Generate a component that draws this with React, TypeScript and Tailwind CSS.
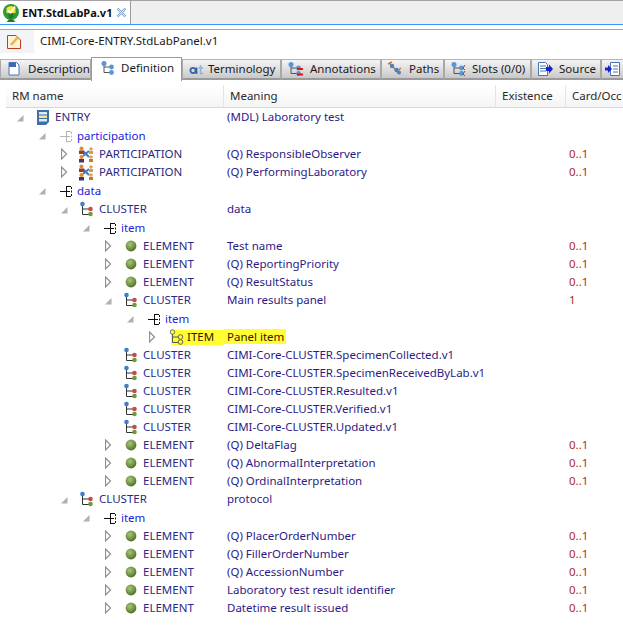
import type { ReactNode } from "react";

type Kind = "entry" | "attr" | "attrOff" | "part" | "cluster" | "element" | "item";

interface Row {
  depth: number;
  arrow: "open" | "closed" | "none";
  kind: Kind;
  name: string;
  meaning?: string;
  card?: string;
  highlight?: boolean;
}

const rows: Row[] = [
  { depth: 0, arrow: "open", kind: "entry", name: "ENTRY", meaning: "(MDL) Laboratory test" },
  { depth: 1, arrow: "open", kind: "attrOff", name: "participation" },
  { depth: 2, arrow: "closed", kind: "part", name: "PARTICIPATION", meaning: "(Q) ResponsibleObserver", card: "0..1" },
  { depth: 2, arrow: "closed", kind: "part", name: "PARTICIPATION", meaning: "(Q) PerformingLaboratory", card: "0..1" },
  { depth: 1, arrow: "open", kind: "attr", name: "data" },
  { depth: 2, arrow: "open", kind: "cluster", name: "CLUSTER", meaning: "data" },
  { depth: 3, arrow: "open", kind: "attr", name: "item" },
  { depth: 4, arrow: "closed", kind: "element", name: "ELEMENT", meaning: "Test name", card: "0..1" },
  { depth: 4, arrow: "closed", kind: "element", name: "ELEMENT", meaning: "(Q) ReportingPriority", card: "0..1" },
  { depth: 4, arrow: "closed", kind: "element", name: "ELEMENT", meaning: "(Q) ResultStatus", card: "0..1" },
  { depth: 4, arrow: "open", kind: "cluster", name: "CLUSTER", meaning: "Main results panel", card: "1" },
  { depth: 5, arrow: "open", kind: "attr", name: "item" },
  { depth: 6, arrow: "closed", kind: "item", name: "ITEM", meaning: "Panel item", highlight: true },
  { depth: 4, arrow: "none", kind: "cluster", name: "CLUSTER", meaning: "CIMI-Core-CLUSTER.SpecimenCollected.v1" },
  { depth: 4, arrow: "none", kind: "cluster", name: "CLUSTER", meaning: "CIMI-Core-CLUSTER.SpecimenReceivedByLab.v1" },
  { depth: 4, arrow: "none", kind: "cluster", name: "CLUSTER", meaning: "CIMI-Core-CLUSTER.Resulted.v1" },
  { depth: 4, arrow: "none", kind: "cluster", name: "CLUSTER", meaning: "CIMI-Core-CLUSTER.Verified.v1" },
  { depth: 4, arrow: "none", kind: "cluster", name: "CLUSTER", meaning: "CIMI-Core-CLUSTER.Updated.v1" },
  { depth: 4, arrow: "closed", kind: "element", name: "ELEMENT", meaning: "(Q) DeltaFlag", card: "0..1" },
  { depth: 4, arrow: "closed", kind: "element", name: "ELEMENT", meaning: "(Q) AbnormalInterpretation", card: "0..1" },
  { depth: 4, arrow: "closed", kind: "element", name: "ELEMENT", meaning: "(Q) OrdinalInterpretation", card: "0..1" },
  { depth: 2, arrow: "open", kind: "cluster", name: "CLUSTER", meaning: "protocol" },
  { depth: 3, arrow: "open", kind: "attr", name: "item" },
  { depth: 4, arrow: "closed", kind: "element", name: "ELEMENT", meaning: "(Q) PlacerOrderNumber", card: "0..1" },
  { depth: 4, arrow: "closed", kind: "element", name: "ELEMENT", meaning: "(Q) FillerOrderNumber", card: "0..1" },
  { depth: 4, arrow: "closed", kind: "element", name: "ELEMENT", meaning: "(Q) AccessionNumber", card: "0..1" },
  { depth: 4, arrow: "closed", kind: "element", name: "ELEMENT", meaning: "Laboratory test result identifier", card: "0..1" },
  { depth: 4, arrow: "closed", kind: "element", name: "ELEMENT", meaning: "Datetime result issued", card: "0..1" },
];

function Arrow({ type }: { type: Row["arrow"] }) {
  if (type === "none") return <span className="w-[9px] h-[11px] shrink-0" />;
  if (type === "open") {
    return (
      <svg width="9" height="11" viewBox="0 0 9 11" className="shrink-0">
        <path d="M0 9.5 H6.5 V3 Z" fill="#b0b0b0" />
      </svg>
    );
  }
  return (
    <svg width="9" height="12" viewBox="0 0 9 12" className="shrink-0">
      <path d="M0.5 1 L5.5 6 L0.5 11 Z" fill="#fff" stroke="#8f8f8f" strokeWidth="1.2" />
    </svg>
  );
}

function KindIcon({ kind }: { kind: Kind }) {
  switch (kind) {
    case "entry":
      return (
        <svg width="14" height="17" viewBox="0 0 14 17">
          <path d="M1 1 H13 V13 L10 16 H1 Z" fill="#3d6fa8" />
          <rect x="3" y="3" width="8" height="2.5" fill="#dfe9f5" />
          <rect x="3" y="6.5" width="8" height="2.5" fill="#f3e79a" />
          <rect x="3" y="10" width="8" height="2.5" fill="#dfe9f5" />
        </svg>
      );
    case "attr":
    case "attrOff": {
      const col = kind === "attr" ? "#111" : "#b5b5b5";
      return (
        <svg width="14" height="14" viewBox="0 0 14 14">
          <path d="M0 7.5 H10 M6.5 2 V13 M6.5 2.5 H11 M6.5 12.5 H11 M11.5 3 V5 M11.5 6.5 V8.5 M11.5 10 V12" fill="none" stroke={col} strokeWidth="1" />
        </svg>
      );
    }
    case "part":
      return (
        <svg width="16" height="17" viewBox="0 0 16 17">
          <path d="M5 10 L11 5 M5 5 L11 11" stroke="#4b78b8" strokeWidth="2" />
          <circle cx="3.5" cy="2.5" r="2" fill="#e08a2c" />
          <path d="M1 8 V4.5 H6 V8 Z" fill="#a33a1e" />
          <circle cx="3.5" cy="11" r="2" fill="#e08a2c" />
          <path d="M1 16.5 V13 H6 V16.5 Z" fill="#3a3a70" />
          <circle cx="13" cy="3" r="1.8" fill="#e8a050" />
          <path d="M11 8 V5 H15 V8 Z" fill="#c9a24a" />
          <circle cx="13" cy="11" r="1.8" fill="#e8a050" />
          <path d="M11 16 V13 H15 V16 Z" fill="#c9772a" />
        </svg>
      );
    case "cluster":
      return (
        <svg width="16" height="16" viewBox="0 0 16 16">
          <path d="M3.5 4 V13.5 H10 M3.5 8 H10" fill="none" stroke="#333" strokeWidth="1" />
          <circle cx="3.5" cy="3" r="2.3" fill="#3f7fc8" />
          <circle cx="11.5" cy="8" r="2.3" fill="#c84a4a" />
          <circle cx="11.5" cy="13" r="2.3" fill="#6e9a3a" />
        </svg>
      );
    case "item":
      return (
        <svg width="16" height="16" viewBox="0 0 16 16">
          <path d="M3.5 4 V13.5 H9 M3.5 8 H9" fill="none" stroke="#555" strokeWidth="1" />
          <circle cx="3.5" cy="3" r="2.3" fill="#ffff33" stroke="#666" strokeWidth="0.9" />
          <circle cx="11.5" cy="8" r="2.3" fill="#ffff33" stroke="#555" strokeWidth="0.9" />
          <circle cx="11.5" cy="13" r="2.3" fill="#ffff33" stroke="#555" strokeWidth="0.9" />
        </svg>
      );
    case "element":
      return (
        <svg width="16" height="16" viewBox="0 0 16 16">
          <defs>
            <radialGradient id="elementBall" cx="40%" cy="35%" r="70%">
              <stop offset="0%" stopColor="#a8c47c" />
              <stop offset="60%" stopColor="#6f9443" />
              <stop offset="100%" stopColor="#47642a" />
            </radialGradient>
          </defs>
          <circle cx="8" cy="8" r="5.4" fill="url(#elementBall)" />
        </svg>
      );
  }
}

function TabIcon({ children }: { children: ReactNode }) {
  return (
    <svg width="16" height="16" viewBox="0 0 16 16" className="shrink-0">
      {children}
    </svg>
  );
}

const nodes = (
  <>
    <path d="M4 5 V12.5 H10 M4 7 H10" fill="none" stroke="#555" />
    <circle cx="4" cy="3.5" r="2.5" fill="#5a94d8" />
    <circle cx="11.5" cy="7" r="2.4" fill="#5a94d8" />
    <circle cx="11.5" cy="12.5" r="2.4" fill="#5a94d8" />
  </>
);

const tabs: { label: string; icon: ReactNode; w: string; gap: string; active?: boolean }[] = [
  {
    label: "Description",
    w: "w-[91px]",
    gap: "gap-[6px]",
    icon: (
      <TabIcon>
        <path d="M3 1.5 H10.5 L13 4 V14 H3 Z" fill="#fff" stroke="#4a76b0" />
        <path d="M3 2 H10 V6 H3 Z" fill="#3e6cae" />
      </TabIcon>
    ),
  },
  { label: "Definition", w: "w-[91px]", gap: "gap-[5px]", active: true, icon: <TabIcon>{nodes}</TabIcon> },
  {
    label: "Terminology",
    w: "w-[99px]",
    gap: "gap-[4px]",
    icon: (
      <TabIcon>
        <circle cx="5" cy="9.5" r="2.6" fill="none" stroke="#3565a8" strokeWidth="1.8" />
        <path d="M8.5 6.5 V13" stroke="#3565a8" strokeWidth="1.8" />
        <path d="M12.5 4 V12.5 H15 M10.5 7 H15" fill="none" stroke="#8fb0d8" strokeWidth="1.5" />
      </TabIcon>
    ),
  },
  {
    label: "Annotations",
    w: "w-[100px]",
    gap: "gap-[7px]",
    icon: (
      <TabIcon>
        {nodes}
        <path d="M10 8 H16 M10 13.5 H16" stroke="#e81010" strokeWidth="2" />
      </TabIcon>
    ),
  },
  {
    label: "Paths",
    w: "w-[63px]",
    gap: "gap-[6px]",
    icon: (
      <TabIcon>
        <path d="M1 3 L5 1 M3 3 L13 13 M9 11 L14 7" stroke="#e07020" strokeWidth="1.6" />
        <circle cx="5" cy="5" r="2.2" fill="#4a82c8" />
        <circle cx="9.5" cy="9" r="2.2" fill="#4a82c8" />
        <circle cx="12" cy="11.5" r="2" fill="#4a82c8" />
      </TabIcon>
    ),
  },
  {
    label: "Slots (0/0)",
    w: "w-[87px]",
    gap: "gap-[6px]",
    icon: (
      <TabIcon>
        {nodes}
        <path d="M15 4 L13 7 L15 9 M15 10 L13 13 L15 15" fill="none" stroke="#c03030" />
      </TabIcon>
    ),
  },
  {
    label: "Source",
    w: "w-[70px]",
    gap: "gap-[6px]",
    icon: (
      <TabIcon>
        <path d="M1.5 1.5 H8.5 L10.5 3.5 V14.5 H1.5 Z" fill="#fff" stroke="#4a76b0" />
        <path d="M3 5 H9 M3 7.5 H9 M3 10 H9" stroke="#4a76b0" />
        <path d="M9 6 H12 V3.5 L16 8 L12 12.5 V10 H9 Z" fill="#1424c8" />
      </TabIcon>
    ),
  },
];

const iconSlot: Record<string, string> = {
  entry: "ml-[10px] w-[15px]",
  part: "ml-[8px] w-[17px]",
  cluster: "ml-[9px] w-[16px]",
  element: "ml-[9px] w-[16px]",
};

export default function App() {
  return (
    <div className="w-[623px] h-[628px] overflow-hidden bg-white text-[11.5px] font-['Noto_Sans','Liberation_Sans',sans-serif] leading-[18px]">
      {/* editor tab */}
      <div className="h-[25px] bg-[#efefef] border-t-[1px] border-t-[#a3a3a3] border-b-[1px] border-b-[#3399ff] flex">
        <div className="w-[131px] h-[23px] bg-white border-r border-r-[#9a9a9a] flex items-center pl-[2px] gap-[2px]">
          <svg width="18" height="20" viewBox="0 0 18 20" className="shrink-0">
            <circle cx="9" cy="9" r="8" fill="#2c9a3a" />
            <path d="M4.5 5 Q9 1 13.5 5 V10 H4.5 Z" fill="#f2e23a" />
            <path d="M6 7 L8.5 10 L13 3.5" stroke="#fff" strokeWidth="1.5" fill="none" />
            <circle cx="9" cy="13" r="2.5" fill="#1f7a2c" />
            <path d="M4.5 19 Q9 13 13.5 19 Z" fill="#1f7a2c" />
          </svg>
          <span className="font-bold text-[11px] text-[#111]">ENT.StdLabPa.v1</span>
          <svg width="11" height="11" viewBox="0 0 11 11" className="ml-[2px] shrink-0">
            <path d="M1.5 1.5 L9.5 9.5 M9.5 1.5 L1.5 9.5" stroke="#7fa3cc" strokeWidth="2.4" />
            <path d="M1.5 1.5 L9.5 9.5 M9.5 1.5 L1.5 9.5" stroke="#fff" strokeWidth="0.8" />
          </svg>
        </div>
      </div>

      {/* title field */}
      <div className="h-[24px] mt-[4px] border-t border-t-[#a6a6a6] flex items-center pl-[6px] gap-[12px] bg-[#f2f4f7]">
        <svg width="16" height="16" viewBox="0 0 16 16" className="shrink-0">
          <path d="M1.5 1.5 H10 L14.5 6 V14.5 H1.5 Z" fill="#fdf3d8" stroke="#b8401f" />
          <path d="M5 11 L12 3" stroke="#e6b450" strokeWidth="2.5" />
        </svg>
        <div className="flex-1 h-[23px] bg-white rounded-l-[2px] pl-[6px] pb-[1px] flex items-center text-[#1a1a1a]">
          CIMI-Core-ENTRY.StdLabPanel.v1
        </div>
      </div>

      {/* view tabs */}
      <div className="h-[27px] flex items-end bg-white">
        {tabs.map((t) =>
          t.active ? (
            <div
              key={t.label}
              className={`${t.w} ${t.gap} h-[24px] shrink-0 flex items-center pl-[8px] pb-[3px] mb-[-1px] bg-white border border-[#9a9a9a] border-b-0 text-[#1a1a1a]`}
            >
              {t.icon}
              <span className="whitespace-nowrap">{t.label}</span>
            </div>
          ) : (
            <div
              key={t.label}
              className={`${t.w} ${t.gap} h-[21px] shrink-0 flex items-center pl-[5px] bg-gradient-to-b from-[#f5f5f5] to-[#c9c9c9] border-x border-x-[#a8a8a8] border-t border-t-[#b5b5b5] border-b-2 border-b-[#9a9a9a] text-[#1a1a1a]`}
            >
              {t.icon}
              <span className="whitespace-nowrap">{t.label}</span>
            </div>
          )
        )}
        <div className="w-[22px] h-[21px] shrink-0 pl-[3px] flex items-center bg-gradient-to-b from-[#f5f5f5] to-[#c9c9c9] border-l border-l-[#a8a8a8] border-t border-t-[#b5b5b5] border-b-2 border-b-[#9a9a9a]">
          <TabIcon>
            <path d="M5.5 1.5 H14.5 V14.5 H5.5 Z" fill="#fff" stroke="#4a76b0" />
            <path d="M8 5 H13 M8 8 H13 M8 11 H13" stroke="#4a76b0" />
            <path d="M7 8 L3 4 V6.5 H0 V9.5 H3 V12 Z" fill="#1424c8" />
          </TabIcon>
        </div>
      </div>

      {/* table header */}
      <div className="mt-[5px] h-[23px] ml-[6px] flex border-b border-b-[#d8d8d8] bg-gradient-to-b from-white to-[#f4f4f4] text-[#2a2a2a]">
        <div className="w-[218px] pl-[6px] flex items-center border-r border-r-[#e4e4e4]">RM name</div>
        <div className="w-[272px] pl-[6px] flex items-center border-r border-r-[#e4e4e4]">Meaning</div>
        <div className="w-[70px] pl-[6px] flex items-center border-r border-r-[#e4e4e4]">Existence</div>
        <div className="pl-[6px] flex items-center whitespace-nowrap">Card/Occ</div>
      </div>

      {/* tree */}
      <div>
        {rows.map((r, i) => {
          const isAttr = r.kind === "attr" || r.kind === "attrOff";
          return (
            <div key={i} className={`flex items-center ${isAttr ? "h-[19px]" : "h-[18px]"}`}>
              <div className="w-[224px] shrink-0 flex items-center whitespace-nowrap" style={{ paddingLeft: 17 + r.depth * 22 }}>
                <Arrow type={r.arrow} />
                {r.highlight ? (
                  <div className="ml-[13px] flex-1 h-[15px] bg-[#ffff33] flex items-center text-[#3a1000]">
                    <span className="ml-[-2px] w-[16px] shrink-0 flex items-center">
                      <KindIcon kind={r.kind} />
                    </span>
                    <span className="ml-[2px]">{r.name}</span>
                  </div>
                ) : isAttr ? (
                  <>
                    <span className="ml-[12px] w-[14px] shrink-0 flex items-center">
                      <KindIcon kind={r.kind} />
                    </span>
                    <span className="ml-[3px] text-[#2222dd]">{r.name}</span>
                  </>
                ) : (
                  <>
                    <span className={`${iconSlot[r.kind]} shrink-0 flex items-center`}>
                      <KindIcon kind={r.kind} />
                    </span>
                    <span className="ml-[4px] text-[#2d2a86]">{r.name}</span>
                  </>
                )}
              </div>
              <div className="w-[345px] shrink-0 text-[#2d1a86] whitespace-nowrap">
                {r.highlight ? (
                  <span className="pl-[3px] pr-[2px] inline-block h-[15px] leading-[15px] bg-[#ffff33] text-[#3a1000]">{r.meaning}</span>
                ) : (
                  <span className="pl-[3px]">{r.meaning}</span>
                )}
              </div>
              <div className="text-[#b02a1a] whitespace-nowrap">{r.card}</div>
            </div>
          );
        })}
      </div>
    </div>
  );
}
